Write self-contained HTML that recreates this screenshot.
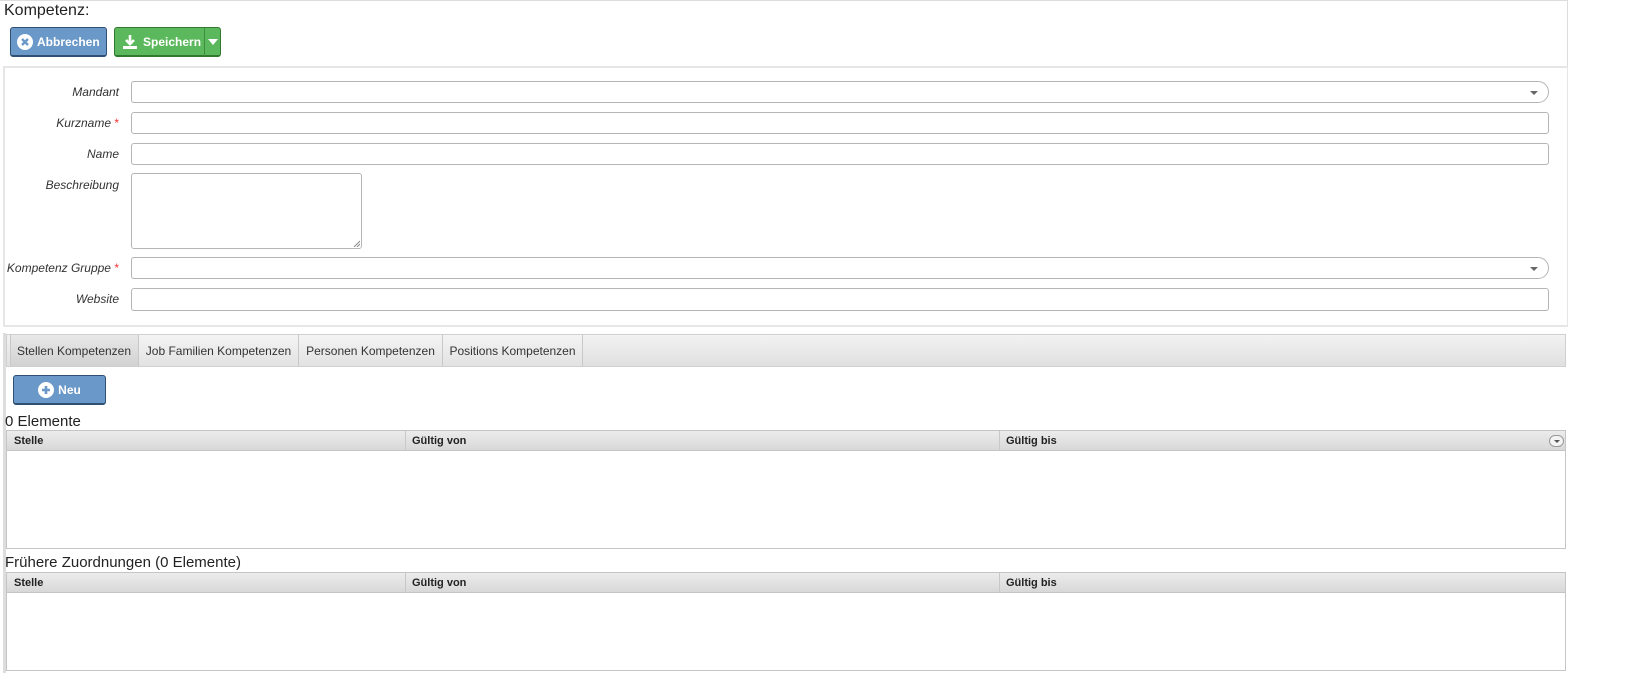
<!DOCTYPE html>
<html><head><meta charset="utf-8"><style>
*{box-sizing:border-box;margin:0;padding:0}
body{width:1629px;height:699px;background:#fff;font-family:"Liberation Sans",Arial,sans-serif;position:relative;overflow:hidden}
.a{position:absolute}
.lbl{position:absolute;right:calc(1629px - 119px);font-size:12px;font-style:italic;color:#333;text-align:right;white-space:nowrap}
.req{color:#e33;font-style:normal}
.inp{position:absolute;left:131px;width:1418px;height:22px;border:1px solid #b5b5b5;border-radius:3px;background:#fff}
.sel{border-radius:3px 11px 11px 3px}
.sel:after{content:"";position:absolute;right:10px;top:9px;border:4px solid transparent;border-top:4px solid #666;border-bottom:0}
.btn{position:absolute;border-radius:3px;color:#fff;font-weight:bold;font-size:12px;display:flex;align-items:center}
.tab{position:absolute;top:335px;height:31px;border-right:1px solid #c8c8c8;font-size:12px;color:#333;line-height:33px;text-align:center;white-space:nowrap;background:linear-gradient(#f4f4f4,#e2e2e2)}
.gh{position:absolute;left:6px;width:1560px;height:21px;border:1px solid #c5c5c5;background:linear-gradient(#ececec,#d8d8d8);font-size:11px;font-weight:bold;color:#222}
.gh span{position:absolute;top:4px}
.gh i{position:absolute;top:0;width:1px;height:20px;background:#c8c8c8}
.gb{position:absolute;left:6px;width:1560px;border:1px solid #c5c5c5;border-top:0;background:#fff}
</style></head><body>
<div class="a" style="left:0;top:0;width:1568px;height:1px;background:#ddd"></div>
<div class="a" style="left:1567px;top:0;width:1px;height:66px;background:#ddd"></div>
<div class="a" style="left:4px;top:2px;font-size:16px;color:#222">Kompetenz:</div>
<div class="btn" style="left:10px;top:27px;width:97px;height:30px;background:#6a98c8;border:1px solid #2f4f73;border-bottom-width:2px">
<svg style="margin-left:6px" width="16" height="16" viewBox="0 0 16 16"><circle cx="8" cy="8" r="8" fill="#fff"/><path d="M5 5L11 11M11 5L5 11" stroke="#6a98c8" stroke-width="2.4"/></svg><span style="margin-left:4px">Abbrechen</span></div>
<div class="btn" style="left:114px;top:27px;width:107px;height:30px;background:#5cb85c;border:1px solid #2f7a2f;border-bottom-width:2px">
<svg style="margin-left:7px" width="16" height="16" viewBox="0 0 16 16"><path d="M8 1V10M4 6L8 10L12 6" stroke="#fff" stroke-width="2.6" fill="none"/><rect x="1" y="12" width="14" height="3" fill="#fff"/></svg><span style="margin-left:5px">Speichern</span>
<div class="a" style="left:89px;top:0;width:1px;height:28px;background:#3e8e3e"></div>
<div class="a" style="left:93px;top:11px;border:5px solid transparent;border-top:6px solid #fff;border-bottom:0"></div></div>
<div class="a" style="left:3px;top:66px;width:1565px;height:261px;border:2px solid #e6e6e6;border-right-width:1px"></div>
<div class="lbl" style="top:85px">Mandant</div>
<div class="inp sel" style="top:81px"></div>
<div class="lbl" style="top:116px">Kurzname <span class="req">*</span></div>
<div class="inp" style="top:112px"></div>
<div class="lbl" style="top:147px">Name</div>
<div class="inp" style="top:143px"></div>
<div class="lbl" style="top:178px">Beschreibung</div>
<div class="inp" style="top:173px;width:231px;height:76px"><svg class="a" style="right:1px;bottom:1px" width="7" height="7"><path d="M1 7L7 1M4 7L7 4" stroke="#888"/></svg></div>
<div class="lbl" style="top:261px">Kompetenz Gruppe <span class="req">*</span></div>
<div class="inp sel" style="top:257px"></div>
<div class="lbl" style="top:292px">Website</div>
<div class="inp" style="top:288px;height:23px"></div>
<div class="a" style="left:3px;top:333px;width:3px;height:340px;background:#ddd"></div>
<div class="a" style="left:6px;top:334px;width:1560px;height:33px;border:1px solid #d0d0d0;background:linear-gradient(#f2f2f2,#e0e0e0)"></div>
<div class="tab" style="left:10px;width:129px;background:linear-gradient(#e8e8e8,#d2d2d2)">Stellen Kompetenzen</div>
<div class="tab" style="left:139px;width:160px">Job Familien Kompetenzen</div>
<div class="tab" style="left:299px;width:144px">Personen Kompetenzen</div>
<div class="tab" style="left:443px;width:140px">Positions Kompetenzen</div>
<div class="a" style="left:10px;top:334px;width:1px;height:32px;background:#c8c8c8"></div>
<div class="btn" style="left:13px;top:375px;width:93px;height:30px;background:#6a98c8;border:1px solid #2f4f73;border-bottom-width:2px;justify-content:center">
<svg width="16" height="16" viewBox="0 0 16 16"><circle cx="8" cy="8" r="8" fill="#fff"/><path d="M8 4V12M4 8H12" stroke="#6a98c8" stroke-width="2.6"/></svg><span style="margin-left:4px">Neu</span></div>
<div class="a" style="left:5px;top:413px;font-size:15px;color:#222">0 Elemente</div>
<div class="gh" style="top:430px"><span style="left:7px">Stelle</span><i style="left:398px"></i><span style="left:405px">Gültig von</span><i style="left:992px"></i><span style="left:999px">Gültig bis</span>
<div class="a" style="left:1542px;top:4px;width:15px;height:12px;border:1px solid #999;border-radius:6px;background:#f4f4f4"></div><div class="a" style="left:1547px;top:9px;border:3px solid transparent;border-top:3px solid #555;border-bottom:0"></div></div>
<div class="gb" style="top:451px;height:98px"></div>
<div class="a" style="left:5px;top:554px;font-size:15px;color:#222">Frühere Zuordnungen (0 Elemente)</div>
<div class="gh" style="top:572px"><span style="left:7px">Stelle</span><i style="left:398px"></i><span style="left:405px">Gültig von</span><i style="left:992px"></i><span style="left:999px">Gültig bis</span></div>
<div class="gb" style="top:593px;height:78px"></div>
</body></html>
